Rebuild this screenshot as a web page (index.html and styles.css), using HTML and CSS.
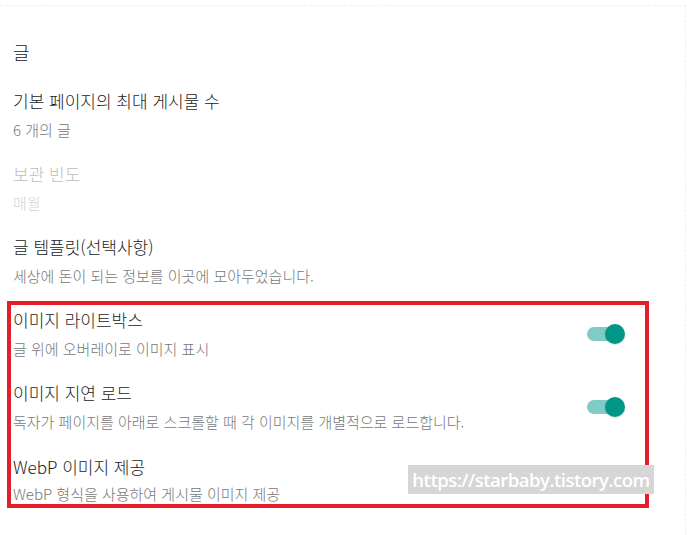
FILE: index.html
```html
<!DOCTYPE html>
<html lang="ko">
<head>
    <meta charset="UTF-8">
    <title>글 설정</title>
    <link rel="stylesheet" href="styles.css">
</head>
<body>
<div class="page">
    <h2 class="section-title">글</h2>

    <div class="item">
        <div class="item-text">
            <p class="item-title">기본 페이지의 최대 게시물 수</p>
            <p class="item-desc">6 개의 글</p>
        </div>
    </div>

    <div class="item disabled">
        <div class="item-text">
            <p class="item-title">보관 빈도</p>
            <p class="item-desc">매월</p>
        </div>
    </div>

    <div class="item">
        <div class="item-text">
            <p class="item-title">글 템플릿(선택사항)</p>
            <p class="item-desc">세상에 돈이 되는 정보를 이곳에 모아두었습니다.</p>
        </div>
    </div>

    <!-- 빨간 박스로 강조한 영역 -->
    <div class="highlight">
        <div class="item">
            <div class="item-text">
                <p class="item-title">이미지 라이트박스</p>
                <p class="item-desc">글 위에 오버레이로 이미지 표시</p>
            </div>
            <span class="toggle on"></span>
        </div>

        <div class="item">
            <div class="item-text">
                <p class="item-title">이미지 지연 로드</p>
                <p class="item-desc">독자가 페이지를 아래로 스크롤할 때 각 이미지를 개별적으로 로드합니다.</p>
            </div>
            <span class="toggle on"></span>
        </div>

        <div class="item last">
            <div class="item-text">
                <p class="item-title">WebP 이미지 제공</p>
                <p class="item-desc">WebP 형식을 사용하여 게시물 이미지 제공</p>
            </div>
        </div>
    </div>

    <!-- 워터마크 -->
    <div class="watermark">https://starbaby.tistory.com</div>
</div>
</body>
</html>
```

FILE: styles.css
```css
* {
    padding: 0;
    margin: 0;
    box-sizing: border-box;
}

body {
    background: #fff;
    font-family: "Noto Sans CJK KR", "Noto Sans", sans-serif;
    color: #212121;
}

.page {
    position: relative;
    width: 686px;
    height: 531px;
    margin: 5px 0 0 0;
    padding: 34px 0 0 13px;
    border-top: 1px dashed #f0f0f0;
    border-right: 1px dashed #f0f0f0;
}

.section-title {
    font-size: 18px;
    font-weight: 300;
    line-height: 24px;
    height: 49px;
}

.item {
    display: flex;
    align-items: center;
    height: 73px;
    padding-bottom: 22px;
}

.item-text {
    flex: 1;
}

.item-title {
    font-size: 17px;
    font-weight: 300;
    line-height: 24px;
    color: #222;
}

.item-desc {
    margin-top: 7px;
    font-size: 15px;
    font-weight: 300;
    line-height: 20px;
    color: #777;
}

.disabled .item-title {
    color: #bdbdbd;
}

.disabled .item-desc {
    color: #d2d2d2;
}

.highlight {
    width: 642px;
    margin: -7px 0 0 -6px;
    padding: 3px 0 0 2px;
    border: 4px solid #e41f2b;
}

.highlight .item.last {
    height: 50px;
    padding-bottom: 0;
}

.highlight .item.last .item-desc {
    margin-top: 5px;
}

.toggle {
    position: relative;
    width: 34px;
    height: 14px;
    margin-right: 24px;
    border-radius: 7px;
    background: #80cbc4;
}

.toggle::after {
    content: "";
    position: absolute;
    top: -3px;
    right: -4px;
    width: 20px;
    height: 20px;
    border-radius: 50%;
    background: #009688;
    box-shadow: 0 1px 2px rgba(0, 0, 0, .15);
}

.watermark {
    position: absolute;
    left: 408px;
    top: 459px;
    width: 246px;
    height: 29px;
    background: #d6d6d6;
    color: #fff;
    font-family: "Open Sans", sans-serif;
    font-size: 18.5px;
    font-weight: 600;
    letter-spacing: -0.5px;
    line-height: 29px;
    text-align: center;
    white-space: nowrap;
}
```
